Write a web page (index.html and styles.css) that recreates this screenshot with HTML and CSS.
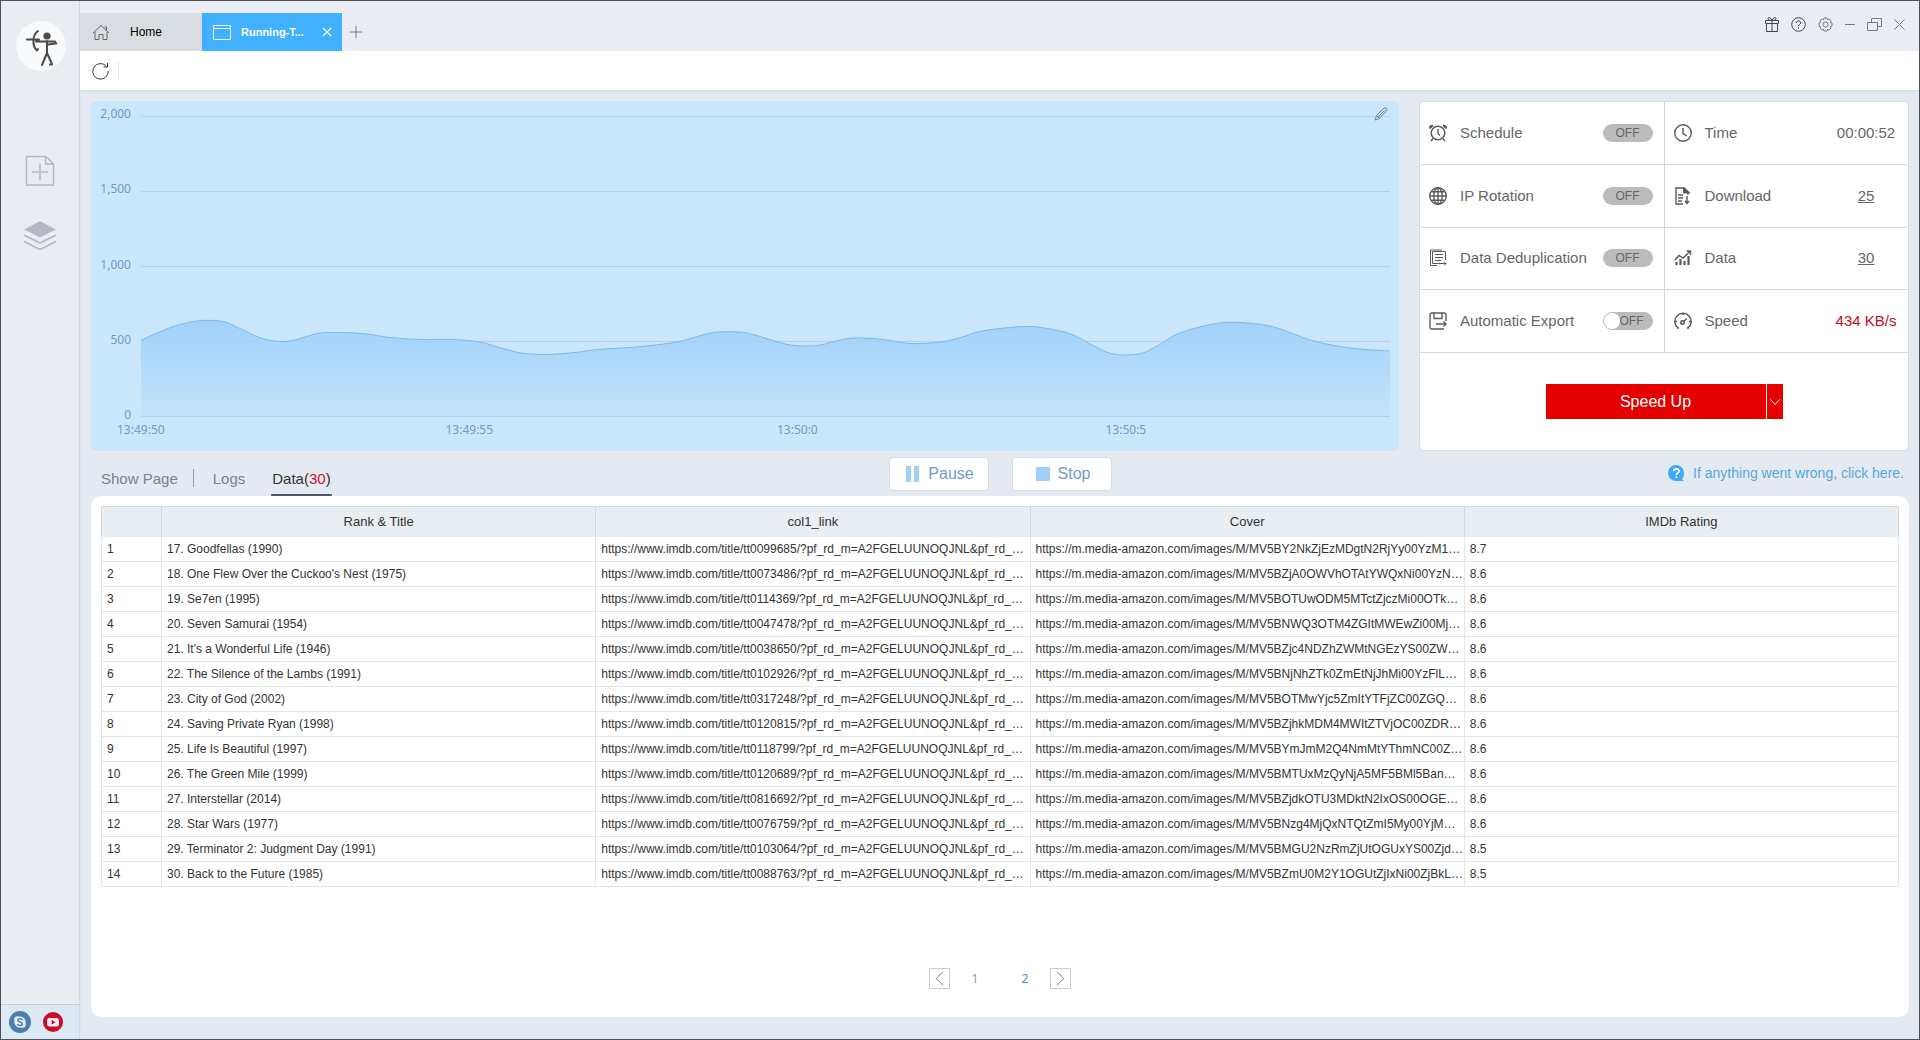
FILE: index.html
```html
<!DOCTYPE html>
<html lang="en">
<head>
<meta charset="utf-8">
<meta name="viewport" content="width=device-width, initial-scale=1">
<title>Running Task</title>
<link rel="stylesheet" href="styles.css">
</head>
<body>
<div class="app">
  <aside class="sidebar">
    <div class="logo">
      <svg width="50" height="50" viewBox="0 0 50 50" fill="none" stroke="#4a4a4a" stroke-width="2" stroke-linecap="round">
        <circle cx="31" cy="15" r="3.6" fill="#4a4a4a" stroke="none"/>
        <path d="M11 18.500H23M31 20V32M20 20.500H39M39 20.500L40 22.500L32 23.500M31 32L26 44M31 32L36 43M34 43.500H36"/>
        <path d="M22 10C16 14 16 25 21 29.500M21 29.500L22 28" stroke-width="2"/>
      </svg>
    </div>
    <nav class="side-nav">
      <button class="icon-btn" aria-label="New task">
        <svg width="30" height="32" viewBox="0 0 30 32" fill="none" stroke="#b3b8c2" stroke-width="1.500"><path d="M1.500 1.500H21L28.500 9V30H1.500Z"/><path d="M20.500 1.500V9H28.500M15 8.500V25M7 17H23"/></svg>
      </button>
      <button class="icon-btn" aria-label="Task list">
        <svg width="34" height="32" viewBox="0 0 34 32" fill="none" stroke="#b3b8c2" stroke-width="1.800"><path d="M17 1L33 9.500L17 17.500L1 9.500Z" fill="#b3b8c2" stroke="none"/><path d="M1 15L17 23L33 15M1 21.500L17 29.500L33 21.500"/></svg>
      </button>
    </nav>
    <div class="social">
      <a href="#" aria-label="Skype"><svg width="22" height="22" viewBox="0 0 22 22"><circle cx="11" cy="11" r="11" fill="#4a7fb0"/><circle cx="11" cy="11" r="5.600" fill="#e8f0f7"/><circle cx="8.500" cy="8.500" r="3.200" fill="#e8f0f7"/><circle cx="13.500" cy="13.500" r="3.200" fill="#e8f0f7"/><path d="M13.400 9.200C13 7.300 8.700 7.200 8.700 9.200C8.700 11.300 13.500 10.600 13.500 12.900C13.500 14.900 8.800 14.900 8.500 12.800" fill="none" stroke="#4a7fb0" stroke-width="1.500"/></svg></a>
      <a href="#" aria-label="YouTube"><svg width="20" height="20" viewBox="0 0 20 20"><circle cx="10" cy="10" r="10" fill="#cc0a2f"/><rect x="4" y="6" width="12" height="8.500" rx="2.500" fill="#f6e8ea"/><path d="M8.700 8L12.500 10.200L8.700 12.400Z" fill="#a00a2a"/></svg></a>
    </div>
  </aside>

  <div class="workspace">
    <header class="titlebar">
      <nav class="doc-tabs">
        <a href="#" class="doc-tab">
          <svg width="18" height="17" viewBox="0 0 18 17" fill="none" stroke="#666" stroke-width="1"><path d="M1 9L9 1.500L17 9M3 8V15.500H7V10.500H11V15.500H15V8M12.500 3H14.500V6"/></svg>
          <span>Home</span>
        </a>
        <div class="doc-tab doc-tab-active">
          <svg width="18" height="15" viewBox="0 0 18 15" fill="none" stroke="#fff"><path d="M.5 .5H17.500V14.500H.5ZM.5 3.500H17.500"/></svg>
          <span>Running-T...</span>
          <button class="icon-btn tab-close" aria-label="Close tab"><svg width="10" height="10" viewBox="0 0 10 10" stroke="#fff" stroke-width="1.200"><path d="M1 1L9 9M9 1L1 9"/></svg></button>
        </div>
        <button class="icon-btn new-tab" aria-label="New tab"><svg width="12" height="12" viewBox="0 0 12 12" stroke="#777"><path d="M6 0V12M0 6H12"/></svg></button>
      </nav>
      <div class="window-tools">
        <button class="icon-btn" aria-label="Gifts"><svg width="14" height="15" viewBox="0 0 14 15" fill="none" stroke="#444"><path d="M.5 3.500H13.500V6.500H.5ZM1.500 6.500V14.500H12.500V6.500M7 3.500V14.500M7 3.500C3.500 3.500 2.500 2 3 1C4 0 6.500 1 7 3.500C7.500 1 10 0 11 1C11.500 2 10.500 3.500 7 3.500M1 6.500H13"/></svg></button>
        <button class="icon-btn" aria-label="Help"><svg width="15" height="15" viewBox="0 0 15 15" fill="none" stroke="#444"><circle cx="7.500" cy="7.500" r="6.800"/><path d="M5.300 6C5.300 3.200 9.700 3.200 9.700 5.800C9.700 7.400 7.500 7.300 7.500 9.200M7.500 10.300V11.500"/></svg></button>
        <button class="icon-btn" aria-label="Settings"><svg width="15" height="15" viewBox="0 0 15 15" fill="none" stroke="#777"><circle cx="7.500" cy="7.500" r="2.500"/><path d="M6 1H9L9.500 2.700L11 1.900L13.100 4L12.300 5.500L14 6V9L12.300 9.500L13.100 11L11 13.100L9.500 12.300L9 14H6L5.500 12.300L4 13.100L1.900 11L2.700 9.500L1 9V6L2.700 5.500L1.900 4L4 1.900L5.500 2.700Z"/></svg></button>
        <button class="icon-btn" aria-label="Minimize"><svg width="10" height="15" viewBox="0 0 10 15" stroke="#777"><path d="M0 7.500H10"/></svg></button>
        <button class="icon-btn" aria-label="Restore"><svg width="15" height="13" viewBox="0 0 15 13" fill="none" stroke="#777"><path d="M.5 4.500H10.500V12.500H.5ZM4.500 4.500V.5H14.500V8.500H10.500"/></svg></button>
        <button class="icon-btn" aria-label="Close"><svg width="11" height="11" viewBox="0 0 11 11" stroke="#777"><path d="M.5 .5L10.500 10.500M10.500 .5L.5 10.500"/></svg></button>
      </div>
    </header>

    <div class="toolbar">
      <button class="icon-btn" aria-label="Refresh"><svg width="17" height="18" viewBox="0 0 17 18" fill="none" stroke="#333"><path d="M14.500 4.500A7.700 7.700 0 1 0 16.200 9M15.500 1V5H11.500"/></svg></button>
    </div>

    <main class="content">
      <section class="overview">
        <div class="chart">
          <div class="y-axis"><span>2,000</span><span>1,500</span><span>1,000</span><span>500</span><span>0</span></div>
          <svg class="plot" viewBox="0 0 1249 301" preserveAspectRatio="none">
            <defs><linearGradient id="fill" x1="0" y1="0" x2="0" y2="1"><stop offset="0" stop-color="#a0d1fa"/><stop offset="1" stop-color="#a0d1fa" stop-opacity=".12"/></linearGradient></defs>
            <path class="grid-line" d="M0 .5H1249M0 75.500H1249M0 150.500H1249M0 225.500H1249M0 300.500H1249"/>
            <path id="area" fill="url(#fill)"/>
            <path id="line" class="speed-line"/>
          </svg>
          <div class="x-axis"><span>13:49:50</span><span>13:49:55</span><span>13:50:0</span><span>13:50:5</span></div>
          <button class="icon-btn chart-edit" aria-label="Edit chart"><svg width="14" height="14" viewBox="0 0 14 14" fill="none" stroke="#6a7f92"><path d="M1 13L2.500 8.500L10 1.200Q11.500 .5 12.500 1.500Q13.500 2.500 12.500 3.800L5.200 11.500ZM2.500 8.500L5.200 11.500M4 10L11 3"/></svg></button>
        </div>

        <div class="status">
          <div class="status-grid">
            <div class="cell">
              <svg class="ico" viewBox="0 0 18 18"><circle cx="9" cy="9" r="6.800"/><path d="M9 5V9.500L11 11.500M1 4.500L4 1.500M17 4.500L14 1.500M4 14.500L2 17M14 14.500L16 17M1 4.500Q0 1 4 1.500M17 4.500Q18 1 14 1.500"/></svg>
              <span>Schedule</span><button class="pill">OFF</button>
            </div>
            <div class="cell">
              <svg class="ico" viewBox="0 0 18 18"><circle cx="9" cy="9" r="8.300"/><path d="M9 4V9.500L13 12"/></svg>
              <span>Time</span><span class="value">00:00:52</span>
            </div>
            <div class="cell">
              <svg class="ico" viewBox="0 0 18 18"><circle cx="9" cy="9" r="8.300"/><ellipse cx="9" cy="9" rx="4.200" ry="8.300"/><path d="M9 1V17M1 9H17M2.500 4.800H15.500M2.500 13.200H15.500"/></svg>
              <span>IP Rotation</span><button class="pill">OFF</button>
            </div>
            <div class="cell">
              <svg class="ico" viewBox="0 0 18 18"><path d="M9 17H2V1H10L14 5.500V8M10 1V5.500H14M4 8H9M4 11H9M4 14H8M13 9V16M11 14L13 16.500L15 14"/><path d="M10 1L15 5.500H10Z" fill="#555"/></svg>
              <span>Download</span><a href="#" class="value">25</a>
            </div>
            <div class="cell">
              <svg class="ico ico-thin" viewBox="0 0 18 18"><path d="M3.500 2.500H16.500V11M3.500 2.500V14.500H12M1.500 16.500H8M1.500 16.500V1H13M6 5.500H14M6 8.500H14M6 11.500H12M11 14.500H17M15 12.500L17 14.500L15 16.500"/></svg>
              <span>Data Deduplication</span><button class="pill">OFF</button>
            </div>
            <div class="cell">
              <svg class="ico" viewBox="0 0 18 18"><path d="M1 11L5 6.500L9 9L16 2.500M12.500 2H16.500V6" /><path d="M2.500 13V16M6.500 10V16M10.500 12V16M14.500 7V16" stroke-width="2.200"/></svg>
              <span>Data</span><a href="#" class="value">30</a>
            </div>
            <div class="cell">
              <svg class="ico" viewBox="0 0 18 18"><path d="M15 17H3Q1 17 1 15V3Q1 1 3 1H15Q17 1 17 3V9M5 1V6.500H13V1M7 12H17M14.500 9.500L17 12L14.500 14.500"/></svg>
              <label for="auto-export">Automatic Export</label>
              <span class="switch"><input type="checkbox" id="auto-export"><span>OFF</span></span>
            </div>
            <div class="cell">
              <svg class="ico" viewBox="0 0 18 18"><path d="M4 16A8.200 8.200 0 1 1 14 16M3 16H5M13 16H15M9 1V3M1 9.500H3M15 9.500H17"/><circle cx="8.500" cy="10.500" r="1.800"/><path d="M9.500 9.500L13 6.500"/></svg>
              <span>Speed</span><span class="value value-hot">434 KB/s</span>
            </div>
          </div>
          <div class="boost">
            <button class="boost-main">Speed Up</button>
            <button class="boost-more" aria-label="Speed options"><svg width="12" height="8" viewBox="0 0 12 8" fill="none" stroke="#fff"><path d="M1 1L6 6.500L11 1"/></svg></button>
          </div>
        </div>
      </section>

      <section class="view-bar">
        <nav class="views">
          <a href="#" class="view view-page">Show Page</a>
          <a href="#" class="view">Logs</a>
          <a href="#" class="view view-active">Data(<em>30</em>)</a>
        </nav>
        <div class="run-actions">
          <button class="run-btn"><svg width="14" height="16" viewBox="0 0 14 16" fill="#9fcffa"><path d="M0 0H5V16H0ZM8 0H13V16H8Z"/></svg>Pause</button>
          <button class="run-btn"><svg width="14" height="14" viewBox="0 0 14 14" fill="#9fcffa"><path d="M0 0H14V14H0Z"/></svg>Stop</button>
        </div>
        <a href="#" class="help-link"><svg width="17" height="17" viewBox="0 0 17 17"><path d="M16 16H8A8 8 0 1 1 16 8Q16 12 14 14Z" fill="#42a9f5"/><path d="M5.700 6.300C5.700 3 11 3 11 6.200C11 8 8.400 8 8.400 10M8.400 11.300V13" fill="none" stroke="#fff" stroke-width="1.700"/></svg>If anything went wrong, click here.</a>
      </section>

      <section class="data-card">
        <table class="data">
          <colgroup><col class="col-num"><col><col><col><col></colgroup>
          <thead><tr><th></th><th>Rank &amp; Title</th><th>col1_link</th><th>Cover</th><th>IMDb Rating</th></tr></thead>
          <tbody>
            <tr><td>1</td><td>17. Goodfellas (1990)</td><td>https://www.imdb.com/title/tt0099685/?pf_rd_m=A2FGELUUNOQJNL&amp;pf_rd_…</td><td>https://m.media-amazon.com/images/M/MV5BY2NkZjEzMDgtN2RjYy00YzM1…</td><td>8.7</td></tr>
            <tr><td>2</td><td>18. One Flew Over the Cuckoo's Nest (1975)</td><td>https://www.imdb.com/title/tt0073486/?pf_rd_m=A2FGELUUNOQJNL&amp;pf_rd_…</td><td>https://m.media-amazon.com/images/M/MV5BZjA0OWVhOTAtYWQxNi00YzN…</td><td>8.6</td></tr>
            <tr><td>3</td><td>19. Se7en (1995)</td><td>https://www.imdb.com/title/tt0114369/?pf_rd_m=A2FGELUUNOQJNL&amp;pf_rd_…</td><td>https://m.media-amazon.com/images/M/MV5BOTUwODM5MTctZjczMi00OTk…</td><td>8.6</td></tr>
            <tr><td>4</td><td>20. Seven Samurai (1954)</td><td>https://www.imdb.com/title/tt0047478/?pf_rd_m=A2FGELUUNOQJNL&amp;pf_rd_…</td><td>https://m.media-amazon.com/images/M/MV5BNWQ3OTM4ZGItMWEwZi00Mj…</td><td>8.6</td></tr>
            <tr><td>5</td><td>21. It's a Wonderful Life (1946)</td><td>https://www.imdb.com/title/tt0038650/?pf_rd_m=A2FGELUUNOQJNL&amp;pf_rd_…</td><td>https://m.media-amazon.com/images/M/MV5BZjc4NDZhZWMtNGEzYS00ZW…</td><td>8.6</td></tr>
            <tr><td>6</td><td>22. The Silence of the Lambs (1991)</td><td>https://www.imdb.com/title/tt0102926/?pf_rd_m=A2FGELUUNOQJNL&amp;pf_rd_…</td><td>https://m.media-amazon.com/images/M/MV5BNjNhZTk0ZmEtNjJhMi00YzFlL…</td><td>8.6</td></tr>
            <tr><td>7</td><td>23. City of God (2002)</td><td>https://www.imdb.com/title/tt0317248/?pf_rd_m=A2FGELUUNOQJNL&amp;pf_rd_…</td><td>https://m.media-amazon.com/images/M/MV5BOTMwYjc5ZmItYTFjZC00ZGQ…</td><td>8.6</td></tr>
            <tr><td>8</td><td>24. Saving Private Ryan (1998)</td><td>https://www.imdb.com/title/tt0120815/?pf_rd_m=A2FGELUUNOQJNL&amp;pf_rd_…</td><td>https://m.media-amazon.com/images/M/MV5BZjhkMDM4MWItZTVjOC00ZDR…</td><td>8.6</td></tr>
            <tr><td>9</td><td>25. Life Is Beautiful (1997)</td><td>https://www.imdb.com/title/tt0118799/?pf_rd_m=A2FGELUUNOQJNL&amp;pf_rd_…</td><td>https://m.media-amazon.com/images/M/MV5BYmJmM2Q4NmMtYThmNC00Z…</td><td>8.6</td></tr>
            <tr><td>10</td><td>26. The Green Mile (1999)</td><td>https://www.imdb.com/title/tt0120689/?pf_rd_m=A2FGELUUNOQJNL&amp;pf_rd_…</td><td>https://m.media-amazon.com/images/M/MV5BMTUxMzQyNjA5MF5BMl5Ban…</td><td>8.6</td></tr>
            <tr><td>11</td><td>27. Interstellar (2014)</td><td>https://www.imdb.com/title/tt0816692/?pf_rd_m=A2FGELUUNOQJNL&amp;pf_rd_…</td><td>https://m.media-amazon.com/images/M/MV5BZjdkOTU3MDktN2IxOS00OGE…</td><td>8.6</td></tr>
            <tr><td>12</td><td>28. Star Wars (1977)</td><td>https://www.imdb.com/title/tt0076759/?pf_rd_m=A2FGELUUNOQJNL&amp;pf_rd_…</td><td>https://m.media-amazon.com/images/M/MV5BNzg4MjQxNTQtZmI5My00YjM…</td><td>8.6</td></tr>
            <tr><td>13</td><td>29. Terminator 2: Judgment Day (1991)</td><td>https://www.imdb.com/title/tt0103064/?pf_rd_m=A2FGELUUNOQJNL&amp;pf_rd_…</td><td>https://m.media-amazon.com/images/M/MV5BMGU2NzRmZjUtOGUxYS00Zjd…</td><td>8.5</td></tr>
            <tr><td>14</td><td>30. Back to the Future (1985)</td><td>https://www.imdb.com/title/tt0088763/?pf_rd_m=A2FGELUUNOQJNL&amp;pf_rd_…</td><td>https://m.media-amazon.com/images/M/MV5BZmU0M2Y1OGUtZjIxNi00ZjBkL…</td><td>8.5</td></tr>
          </tbody>
        </table>
        <nav class="pager">
          <button class="pager-arrow" aria-label="Previous page"><svg width="9" height="15" viewBox="0 0 9 15" fill="none" stroke="#888"><path d="M8 1L1 7.500L8 14"/></svg></button>
          <a href="#" class="page">1</a>
          <a href="#" class="page page-current">2</a>
          <button class="pager-arrow" aria-label="Next page"><svg width="9" height="15" viewBox="0 0 9 15" fill="none" stroke="#888"><path d="M1 1L8 7.500L1 14"/></svg></button>
        </nav>
      </section>
    </main>
  </div>
</div>
<script src="chart.js"></script>
</body>
</html>
```
FILE: styles.css
```css
* { box-sizing: border-box; }

body {
  margin: 0;
  font: 12px/16px "Liberation Sans", Arial, sans-serif;
  color: #333;
}

a { color: inherit; text-decoration: none; }
button { font: inherit; color: inherit; padding: 0; border: 0; background: none; cursor: pointer; }
svg { display: block; flex: none; }
.icon-btn { display: flex; align-items: center; justify-content: center; }

.app {
  display: flex;
  min-height: 100vh;
  border: 1px solid #505057;
  background: #e3eaf2;
}

/* Sidebar */
.sidebar {
  flex: none;
  width: 79px;
  display: flex;
  flex-direction: column;
  background: #e9edf2;
  border-right: 1px solid #cbd9e6;
}
.logo { margin: 20px auto 0 15px; border-radius: 50%; background: #f8f9fa; }
.side-nav { display: flex; flex-direction: column; align-items: center; gap: 33px; margin-top: 84px; flex: 1; }
.social {
  display: flex;
  align-items: center;
  gap: 12px;
  height: 35px;
  padding-left: 8px;
  background: #dce9f2;
  border-top: 1px solid #bcd2e5;
}

/* Title bar */
.workspace { flex: 1; min-width: 0; display: flex; flex-direction: column; }
.titlebar {
  display: flex;
  justify-content: space-between;
  height: 50px;
  padding: 12px 14px 0 0;
  background: #eaedf3;
}
.doc-tabs { display: flex; }
.doc-tab {
  display: flex;
  align-items: center;
  gap: 20px;
  width: 122px;
  padding-left: 12px;
  background: #d8dde1;
  color: #000;
}
.doc-tab-active {
  width: 140px;
  gap: 10px;
  padding: 0 10px 0 11px;
  background: #41b0fe;
  color: #fff;
  font-size: 11px;
  font-weight: bold;
}
.tab-close { margin-left: auto; }
.new-tab { padding: 0 8px; }
.window-tools { display: flex; gap: 12px; height: 22px; align-items: center; }

.toolbar {
  display: flex;
  align-items: center;
  height: 39px;
  padding-left: 12px;
  background: #fff;
}
.toolbar .icon-btn { padding-right: 9px; border-right: 1px solid #e0e3e6; }

/* Content */
.content { flex: 1; display: flex; flex-direction: column; padding: 11px 10px 22px 11px; box-shadow: inset 0 2px 2px #d9e0e6; }
.overview { display: flex; gap: 20px; height: 350px; }

.chart {
  position: relative;
  flex: 1;
  min-width: 0;
  display: grid;
  grid-template: 301px 1fr / 40px 1fr;
  column-gap: 10px;
  padding: 15px 9px 0 0;
  border-radius: 6px;
  background: #c9e6fa;
  font: 12px/12px "Noto Sans", "Open Sans", sans-serif;
  color: #7399c6;
}
.y-axis { display: flex; flex-direction: column; justify-content: space-between; margin: -8px 0 -4px; text-align: right; }
.plot { width: 100%; height: 100%; }
.grid-line { stroke: #aed3ec; vector-effect: non-scaling-stroke; }
.speed-line { fill: none; stroke: #7fb9e8; stroke-width: 1; vector-effect: non-scaling-stroke; }
.x-axis { grid-column: 2; display: flex; margin: 7px 24px 0 -24px; }
.x-axis span { width: 26.3%; flex: none; }
.x-axis span:nth-child(n+3) { padding-left: 3px; }
.chart-edit { position: absolute; right: 11px; top: 6px; }

.status {
  flex: none;
  width: 490px;
  display: flex;
  flex-direction: column;
  border: 1px solid #d5dbe0;
  border-radius: 6px;
  background: #fff;
  overflow: hidden;
}
.status-grid {
  display: grid;
  grid-template: repeat(4, 1fr) / 1fr 1fr;
  gap: 1px;
  height: 251px;
  padding-bottom: 1px;
  background: #d2d6da;
}
.cell {
  display: flex;
  align-items: center;
  gap: 13px;
  padding: 0 11px 0 9px;
  background: #fff;
  font-size: 15px;
  line-height: 20px;
  color: #666;
}
.ico { width: 18px; height: 18px; fill: none; stroke: #5a5a5a; stroke-width: 1.4; }
.ico-thin { stroke-width: 1; }
.pill, .switch, .value { margin-left: auto; }
.pill, .switch {
  width: 50px;
  height: 18px;
  border-radius: 9px;
  background: #bbb;
  font-size: 12px;
  line-height: 18px;
  text-align: center;
}
.switch { position: relative; padding-left: 8px; border: 1px solid #bbb; line-height: 16px; }
.switch input {
  position: absolute;
  left: 0;
  top: 0;
  width: 16px;
  height: 16px;
  margin: 0;
  appearance: none;
  border-radius: 50%;
  background: #fff;
}
.value { width: 62px; text-align: center; white-space: nowrap; }
a.value { text-decoration: underline; }
.value-hot { color: #c00d1e; }

.boost { flex: 1; display: flex; align-items: center; justify-content: center; gap: 1px; }
.boost-main, .boost-more { height: 35px; background: #e50000; color: #fff; }
.boost-main { width: 220px; font-size: 16px; }
.boost-more { display: grid; place-items: center; width: 16px; }

/* View tabs and run controls */
.view-bar { display: grid; grid-template-columns: 1fr auto 1fr; height: 45px; }
.views { display: flex; align-items: flex-end; padding-left: 10px; font-size: 15px; line-height: 20px; color: #7b8288; }
.view { padding-bottom: 7px; margin-right: 26px; }
.view-page { padding-right: 16px; margin-right: 19px; background: linear-gradient(#9aa2a8, #9aa2a8) right top / 1px 18px no-repeat; }
.view-active { padding: 0 1px 5px; color: #333; border-bottom: 2px solid #4a5a66; border-radius: 1px; }
.view-active em { font-style: normal; color: #c8102e; }
.run-actions { display: flex; gap: 23px; padding-top: 6px; }
.run-btn {
  display: flex;
  align-items: center;
  justify-content: center;
  gap: 8px;
  width: 100px;
  height: 34px;
  padding-left: 3px;
  border: 1px solid #d5dce2;
  border-radius: 4px;
  background: #fff;
  color: #6f9ccb;
  font-size: 16px;
}
.help-link {
  display: flex;
  align-items: center;
  justify-content: flex-end;
  gap: 8px;
  height: 44px;
  padding-right: 5px;
  font-size: 14px;
  color: #5aa5dc;
}

/* Data table */
.data-card { flex: 1; display: flex; flex-direction: column; padding: 10px 10px 28px; border-radius: 10px; background: #fff; }
.data { width: 100%; table-layout: fixed; border-collapse: collapse; }
.col-num { width: 60px; }
.data th {
  height: 30px;
  padding: 0;
  border: 1px solid #d3d9dd;
  border-bottom-color: #e6ecef;
  background: #e8eef2;
  font-size: 13px;
  font-weight: normal;
}
.data td {
  height: 25px;
  padding: 0 0 0 5px;
  border: 1px solid #e2e7ea;
  white-space: nowrap;
  overflow: hidden;
}

.pager { display: flex; align-items: center; justify-content: center; margin-top: auto; font: 12px/16px "Noto Sans", sans-serif; color: #999; }
.pager-arrow { display: grid; place-items: center; width: 21px; height: 21px; border: 1px solid #ccc; }
.page { width: 50px; text-align: center; }
.page-current { color: #4a90c4; }
```
FILE: chart.js
```js
// Speed samples as [x, y] in plot units (y grows downwards, 0 = 2,000 KB/s, 300 = 0).
const samples = [
  [0, 224], [31, 211], [50, 206], [66, 204.3], [84, 206], [100, 213], [117, 221], [133, 225], [149, 225],
  [164, 221], [180, 217], [202, 216.5], [226, 218], [249, 221.5], [279, 223.5], [312, 223.5],
  [339, 226], [360, 232], [380, 237], [405, 238.5], [434, 236.5], [457, 233.5], [495, 231],
  [536, 226], [570, 217], [598, 216], [614, 219], [644, 228], [663, 230], [679, 229], [704, 223],
  [721, 222], [742, 223.5], [764, 227], [779, 227.5], [800, 226], [818, 222], [841, 215],
  [869, 211.5], [887, 210.5], [904, 212], [930, 218], [949, 228], [968, 237], [985, 239],
  [1002, 237], [1016, 230], [1039, 217], [1075, 207.5], [1099, 206.5], [1129, 210],
  [1149, 216.5], [1171, 224.5], [1199, 230.5], [1224, 233.5], [1249, 235]
];

// Catmull-Rom smoothing expressed as cubic segments.
let curve = `M${samples[0]}`;
for (let i = 0; i < samples.length - 1; i++) {
  const p0 = samples[i - 1] || samples[i];
  const p1 = samples[i];
  const p2 = samples[i + 1];
  const p3 = samples[i + 2] || p2;
  const c1 = [p1[0] + (p2[0] - p0[0]) / 6, p1[1] + (p2[1] - p0[1]) / 6];
  const c2 = [p2[0] - (p3[0] - p1[0]) / 6, p2[1] - (p3[1] - p1[1]) / 6];
  curve += `C${c1} ${c2} ${p2}`;
}
document.getElementById("line").setAttribute("d", curve);
document.getElementById("area").setAttribute("d", `${curve}V300H0Z`);
```
